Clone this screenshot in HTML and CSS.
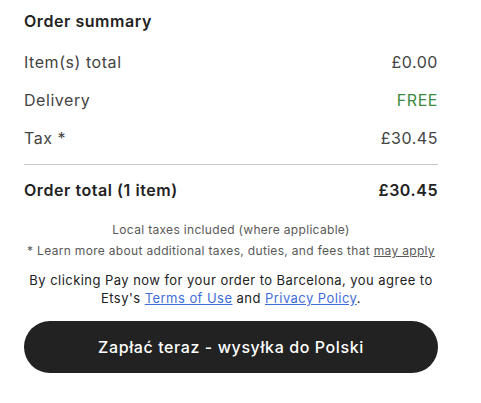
FILE: index.html
```html
<!DOCTYPE html>
<html>
<head>
<meta charset="utf-8">
<link rel="stylesheet" href="styles.css">
</head>
<body>
<div class="summary">
  <h2 class="title">Order summary</h2>
  <div class="rows">
    <div class="row"><span>Item(s) total</span><span>£0.00</span></div>
    <div class="row"><span>Delivery</span><span class="free">FREE</span></div>
    <div class="row"><span>Tax *</span><span>£30.45</span></div>
  </div>
  <div class="divider"></div>
  <div class="row total"><span>Order total (1 item)</span><span>£30.45</span></div>
  <p class="note note1">Local taxes included (where applicable)</p>
  <p class="note note2">* Learn more about additional taxes, duties, and fees that <a class="plain">may apply</a></p>
  <p class="agree">By clicking Pay now for your order to Barcelona, you agree to Etsy's <a class="link">Terms of Use</a> and <a class="link">Privacy Policy</a>.</p>
  <button class="pay">Zapłać teraz - wysyłka do Polski</button>
</div>
</body>
</html>
```
FILE: styles.css
```css
html, body { margin: 0; padding: 0; background: #fff; }
body { font-family: "Inter", "Liberation Sans", sans-serif; color: #222; }
.summary { width: 414px; margin-left: 24px; padding-top: 10px; }
.title { margin: 0; font-size: 16px; font-weight: 600; line-height: 22px; color: #222; letter-spacing: 0.55px; }
.rows { margin-top: 19px; display: flex; flex-direction: column; gap: 16px; }
.row { display: flex; justify-content: space-between; font-size: 16px; line-height: 22px; color: #444; letter-spacing: 0.55px; }
.free { color: #3b8a3e; }
.divider { height: 1px; background: #c8c8c8; margin-top: 15px; }
.total { margin-top: 14px; font-weight: 600; color: #222; }
.note { margin: 0; text-align: center; font-size: 12px; line-height: 18px; color: #595959; letter-spacing: 0.32px; }
.note1 { margin-top: 20px; }
.note2 { margin-top: 3px; }
.plain { color: #595959; text-decoration: underline; }
.agree { margin: 11px 0 0; text-align: center; font-size: 13px; line-height: 18px; color: #222; letter-spacing: 0.45px; }
.link { color: #3f6ed8; text-decoration: underline; }
.pay { display: block; width: 100%; height: 52px; margin-top: 14px; border: none; border-radius: 26px; background: #222; color: #fff; font-family: "Inter", "Liberation Sans", sans-serif; font-size: 16px; font-weight: 500; letter-spacing: 0.6px; }
```
